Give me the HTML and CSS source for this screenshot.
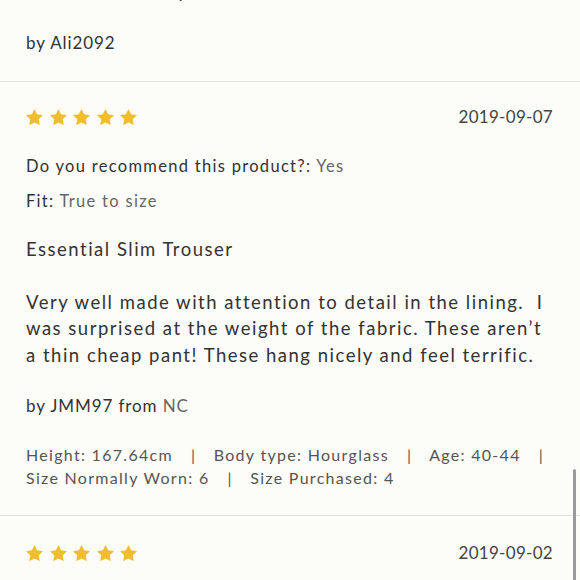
FILE: index.html
```html
<!DOCTYPE html>
<html lang="en">
<head>
<meta charset="utf-8">
<title>Reviews</title>
<link rel="stylesheet" href="styles.css">
</head>
<body>
<div class="reviews">
  <section class="review review-prev">
    <p class="body cut">Smart and sturdy trousers.</p>
    <p class="author">by Ali2092</p>
  </section>
  <section class="review">
    <div class="head">
      <div class="stars">
        <svg viewBox="2 2 20 19.02"><polygon points="12,2 15.09,8.26 22,9.27 17,14.14 18.18,21.02 12,17.77 5.82,21.02 7,14.14 2,9.27 8.91,8.26"/></svg>
        <svg viewBox="2 2 20 19.02"><polygon points="12,2 15.09,8.26 22,9.27 17,14.14 18.18,21.02 12,17.77 5.82,21.02 7,14.14 2,9.27 8.91,8.26"/></svg>
        <svg viewBox="2 2 20 19.02"><polygon points="12,2 15.09,8.26 22,9.27 17,14.14 18.18,21.02 12,17.77 5.82,21.02 7,14.14 2,9.27 8.91,8.26"/></svg>
        <svg viewBox="2 2 20 19.02"><polygon points="12,2 15.09,8.26 22,9.27 17,14.14 18.18,21.02 12,17.77 5.82,21.02 7,14.14 2,9.27 8.91,8.26"/></svg>
        <svg viewBox="2 2 20 19.02"><polygon points="12,2 15.09,8.26 22,9.27 17,14.14 18.18,21.02 12,17.77 5.82,21.02 7,14.14 2,9.27 8.91,8.26"/></svg>
      </div>
      <span class="date">2019-09-07</span>
    </div>
    <p class="field first">Do you recommend this product?: <span class="val">Yes</span></p>
    <p class="field">Fit: <span class="val">True to size</span></p>
    <h3 class="title">Essential Slim Trouser</h3>
    <p class="body">Very well made with attention to detail in the lining.&nbsp; I was surprised at the weight of the fabric. These aren’t a thin cheap pant! These hang nicely and feel terrific.</p>
    <p class="author">by JMM97 from <span class="val">NC</span></p>
    <p class="meta"><span class="item">Height: 167.64cm</span><span class="sep">|</span> <span class="item">Body type: Hourglass</span><span class="sep">|</span> <span class="item">Age: 40-44</span><span class="sep">|</span> <span class="item">Size Normally Worn: 6</span><span class="sep">|</span> <span class="item">Size Purchased: 4</span></p>
  </section>
  <section class="review review-next">
    <div class="head">
      <div class="stars">
        <svg viewBox="2 2 20 19.02"><polygon points="12,2 15.09,8.26 22,9.27 17,14.14 18.18,21.02 12,17.77 5.82,21.02 7,14.14 2,9.27 8.91,8.26"/></svg>
        <svg viewBox="2 2 20 19.02"><polygon points="12,2 15.09,8.26 22,9.27 17,14.14 18.18,21.02 12,17.77 5.82,21.02 7,14.14 2,9.27 8.91,8.26"/></svg>
        <svg viewBox="2 2 20 19.02"><polygon points="12,2 15.09,8.26 22,9.27 17,14.14 18.18,21.02 12,17.77 5.82,21.02 7,14.14 2,9.27 8.91,8.26"/></svg>
        <svg viewBox="2 2 20 19.02"><polygon points="12,2 15.09,8.26 22,9.27 17,14.14 18.18,21.02 12,17.77 5.82,21.02 7,14.14 2,9.27 8.91,8.26"/></svg>
        <svg viewBox="2 2 20 19.02"><polygon points="12,2 15.09,8.26 22,9.27 17,14.14 18.18,21.02 12,17.77 5.82,21.02 7,14.14 2,9.27 8.91,8.26"/></svg>
      </div>
      <span class="date">2019-09-02</span>
    </div>
  </section>
</div>
<div class="scrollbar"></div>
</body>
</html>
```
FILE: styles.css
```css
html, body {
  margin: 0;
  padding: 0;
  background: #fcfcf9;
  overflow: hidden;
  height: 580px;
}
body {
  font-family: Lato, "Noto Sans", sans-serif;
  color: #333333;
}
p, h3 {
  margin: 0;
}
.reviews {
  display: flex;
  flex-direction: column;
}
.review {
  padding: 26px 26px 26px 26px;
  border-bottom: 1px solid #e2e2de;
}
.review-prev {
  padding-top: 0;
}
.review-next {
  padding-top: 28px;
}
.head {
  display: flex;
  justify-content: space-between;
  align-items: center;
  padding-right: 1px;
}
.stars {
  display: flex;
  gap: 6.5px;
}
.stars svg {
  width: 17px;
  height: 16.2px;
  fill: #efbd2f;
  display: block;
}
.date {
  font-size: 17px;
  letter-spacing: 0.3px;
  color: #444444;
  line-height: 20px;
  margin-top: -1px;
}
.field {
  font-size: 16.5px;
  letter-spacing: 1.3px;
  line-height: 24px;
  color: #333333;
}
.field.first {
  margin-top: 27px;
}
.field + .field {
  margin-top: 11px;
}
.val {
  color: #666666;
}
.title {
  font-size: 18.5px;
  font-weight: normal;
  letter-spacing: 1.5px;
  line-height: 26px;
  margin-top: 23px;
}
.body {
  font-size: 18.5px;
  letter-spacing: 1.5px;
  line-height: 26.7px;
  margin-top: 27px;
  color: #333333;
}
.review-prev .body {
  margin-top: -22px;
}
.author {
  font-size: 17px;
  letter-spacing: 0.9px;
  line-height: 24px;
  margin-top: 25px;
}
.review-prev .author {
  margin-top: 26px;
}
.meta {
  font-size: 16px;
  letter-spacing: 1.3px;
  line-height: 23px;
  color: #555555;
  margin-top: 25px;
  margin-right: -6px;
}
.item {
  white-space: nowrap;
}
.sep {
  padding: 0 12px 0 18px;
}
.scrollbar {
  position: fixed;
  right: 4px;
  top: 469px;
  width: 3px;
  height: 120px;
  border-radius: 2px;
  background: #9a9a9a;
}
```
